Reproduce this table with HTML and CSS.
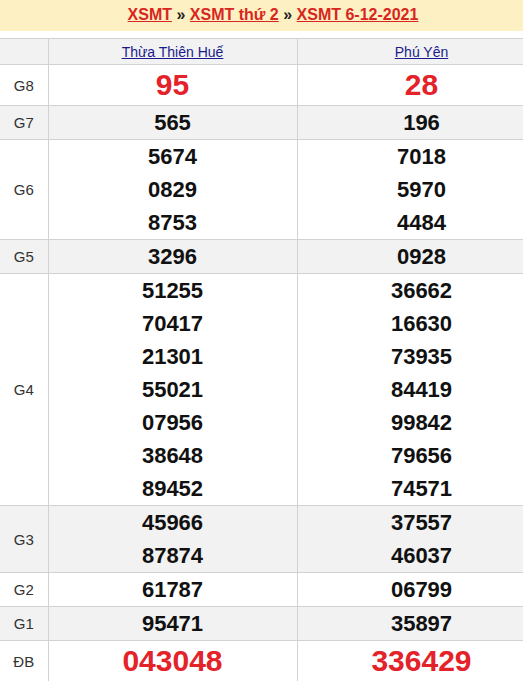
FILE: index.html
```html
<!DOCTYPE html>
<html lang="vi">
<head>
<meta charset="utf-8">
<title>XSMT 6-12-2021</title>
<link rel="stylesheet" href="styles.css">
</head>
<body>
<div class="page">
  <div class="crumbs">
    <a href="#">XSMT</a> <span class="sep">»</span> <a href="#">XSMT thứ 2</a> <span class="sep">»</span> <a href="#">XSMT 6-12-2021</a>
  </div>
  <table class="results">
    <colgroup><col class="c-label"><col class="c-prov"><col class="c-prov"></colgroup>
    <thead>
      <tr class="alt head">
        <th></th>
        <th><a href="#">Thừa Thiên Huế</a></th>
        <th><a href="#">Phú Yên</a></th>
      </tr>
    </thead>
    <tbody>
      <tr class="big-row">
        <td class="label">G8</td>
        <td><div class="num big red">95</div></td>
        <td><div class="num big red">28</div></td>
      </tr>
      <tr class="alt">
        <td class="label">G7</td>
        <td><div class="num">565</div></td>
        <td><div class="num">196</div></td>
      </tr>
      <tr>
        <td class="label">G6</td>
        <td><div class="num">5674</div><div class="num">0829</div><div class="num">8753</div></td>
        <td><div class="num">7018</div><div class="num">5970</div><div class="num">4484</div></td>
      </tr>
      <tr class="alt">
        <td class="label">G5</td>
        <td><div class="num">3296</div></td>
        <td><div class="num">0928</div></td>
      </tr>
      <tr>
        <td class="label">G4</td>
        <td><div class="num">51255</div><div class="num">70417</div><div class="num">21301</div><div class="num">55021</div><div class="num">07956</div><div class="num">38648</div><div class="num">89452</div></td>
        <td><div class="num">36662</div><div class="num">16630</div><div class="num">73935</div><div class="num">84419</div><div class="num">99842</div><div class="num">79656</div><div class="num">74571</div></td>
      </tr>
      <tr class="alt">
        <td class="label">G3</td>
        <td><div class="num">45966</div><div class="num">87874</div></td>
        <td><div class="num">37557</div><div class="num">46037</div></td>
      </tr>
      <tr>
        <td class="label">G2</td>
        <td><div class="num">61787</div></td>
        <td><div class="num">06799</div></td>
      </tr>
      <tr class="alt">
        <td class="label">G1</td>
        <td><div class="num">95471</div></td>
        <td><div class="num">35897</div></td>
      </tr>
      <tr class="big-row">
        <td class="label">ĐB</td>
        <td><div class="num big red">043048</div></td>
        <td><div class="num big red">336429</div></td>
      </tr>
    </tbody>
  </table>
</div>
</body>
</html>
```

FILE: styles.css
```css
html, body {
  margin: 0;
  padding: 0;
  background: #ffffff;
  overflow: hidden;
}
body {
  font-family: "Liberation Sans", Arial, sans-serif;
  color: #000;
}
.page {
  width: 546px;
}
.crumbs {
  height: 31px;
  line-height: 29px;
  background: #fdf0c2;
  text-align: center;
  font-size: 16px;
  font-weight: bold;
  color: #222;
}
.crumbs a {
  color: #d8261f;
  text-decoration: underline;
}
.crumbs .sep {
  color: #222;
}
.results {
  margin-top: 7px;
  width: 546px;
  table-layout: fixed;
  border-collapse: collapse;
}
.c-label { width: 48px; }
.c-prov { width: 249px; }
.results th,
.results td {
  border: 1px solid #d2d2d2;
  padding: 0;
  text-align: center;
  vertical-align: middle;
}
.results tr > :first-child {
  border-left: none;
}
.results th {
  height: 25px;
  font-weight: normal;
  font-size: 14px;
}
.results th a {
  color: #1a1a8c;
  text-decoration: underline;
}
.alt {
  background: #f2f2f2;
}
.label {
  font-size: 15px;
  color: #333;
}
.num {
  font-size: 22px;
  font-weight: bold;
  line-height: 33px;
  color: #111;
}
.num.big {
  font-size: 30px;
  line-height: 40px;
}
.num.red {
  color: #e3222a;
}
```
